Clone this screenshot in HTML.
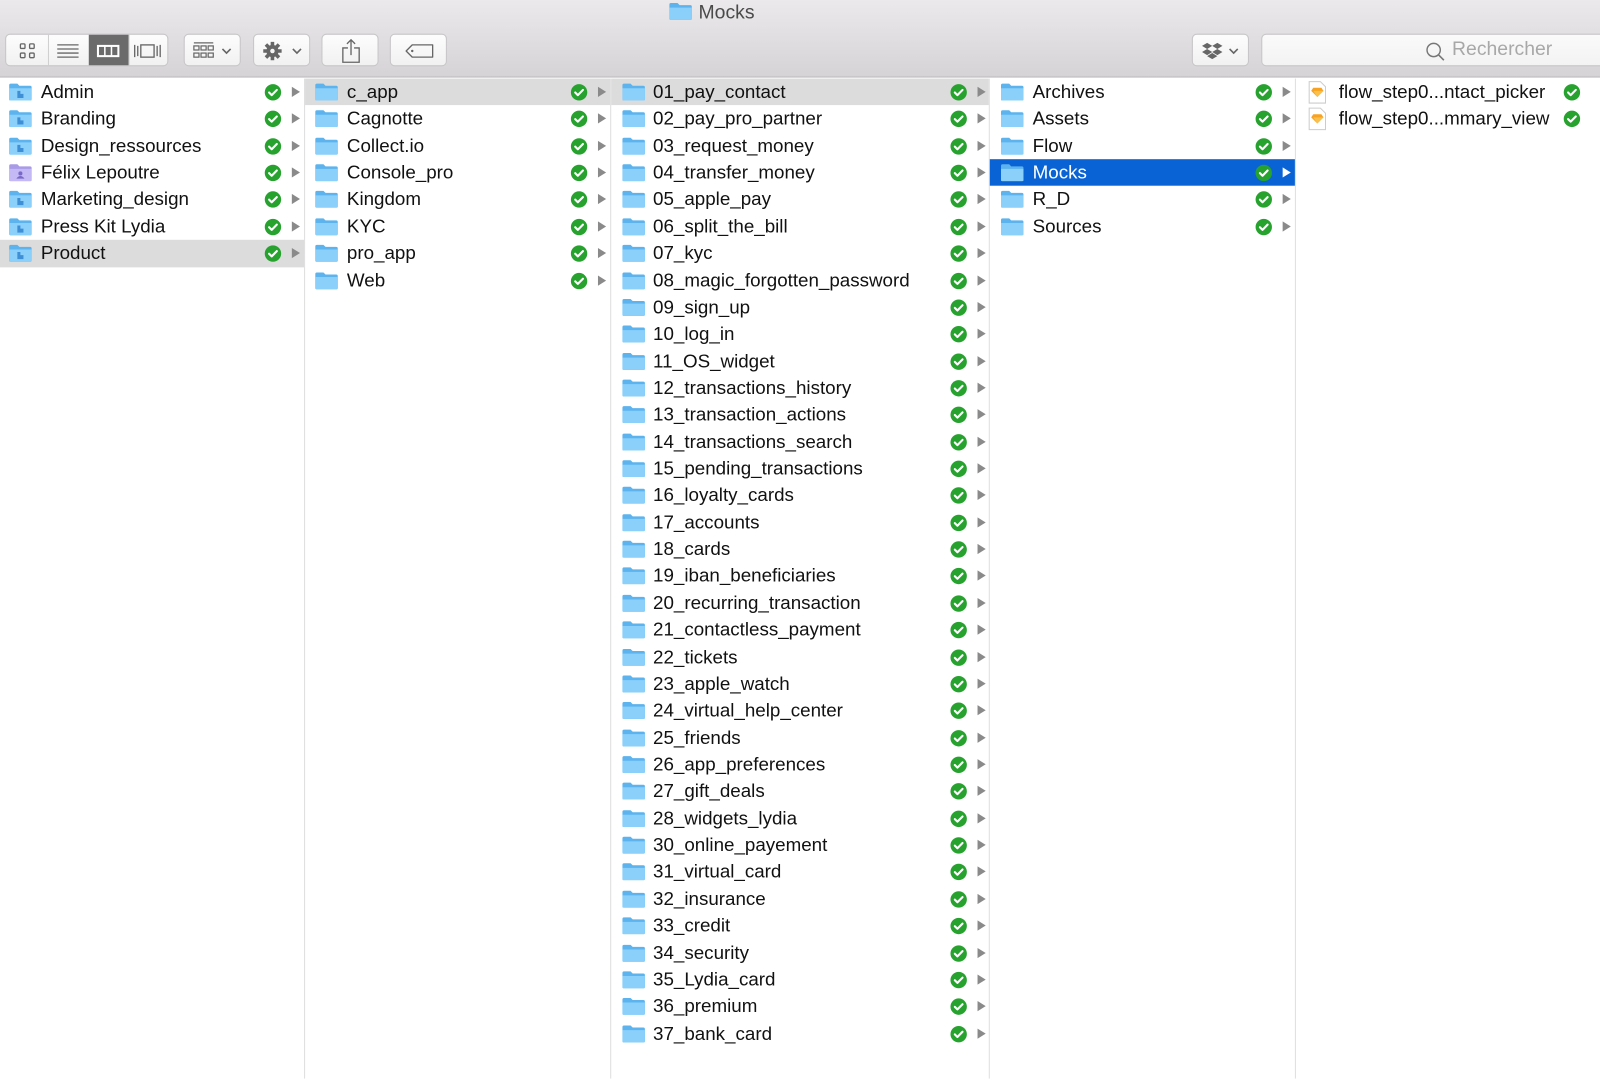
<!DOCTYPE html>
<html><head><meta charset="utf-8"><style>
*{margin:0;padding:0;box-sizing:border-box}
body{width:1600px;height:1055px;overflow:hidden;background:#fff;font-family:"Liberation Sans",sans-serif;position:relative}
#w{position:absolute;left:0;top:0;width:1568px;height:1034px;transform:scale(1.0204);transform-origin:0 0}
#tb{position:absolute;left:0;top:0;width:1600px;height:76px;background:linear-gradient(#ebe9eb,#d5d3d5);border-bottom:1px solid #b9b7b9}
#title{position:absolute;top:2px;left:0;width:1394px;text-align:center;font-size:19px;color:#4a4a4a}
.btn{position:absolute;top:33px;height:32px;background:linear-gradient(#fdfdfd,#f1f1f1);border:1px solid #c8c6c8;border-radius:5px}
.col{position:absolute;top:77px;height:980px;border-right:1px solid #dedede}
.r{height:26.37px;position:relative;font-size:18.4px;color:#111;line-height:26px;white-space:nowrap}
.r.g{background:#dcdcdc}.r.b{background:#0a63d5;color:#fff}
.r svg.f{position:absolute;top:4px}
.r .t{position:absolute}
.r svg.c{position:absolute;top:5px;width:17px;height:17px}
.r .a{position:absolute;top:8px;width:0;height:0;border-left:8px solid #8a8a8a;border-top:5px solid transparent;border-bottom:5px solid transparent}
.r.b .a{border-left-color:#fff}
#c1 .f{left:8px}#c1 .t{left:40px}#c1 .c{left:259px}#c1 .a{left:286px}
#c2 .f{left:9px}#c2 .t{left:41px}#c2 .c{left:260px}#c2 .a{left:287px}
#c3 .f{left:10px}#c3 .t{left:41px}#c3 .c{left:332px}#c3 .a{left:359px}
#c4 .f{left:10px}#c4 .t{left:42px}#c4 .c{left:260px}#c4 .a{left:287px}
</style></head><body>
<svg width="0" height="0" style="position:absolute"><defs>
<symbol id="fo" viewBox="0 0 24 18"><path d="M1 2.5Q1 1 2.5 1H9l2 2h10.5Q23 3 23 4.5V16.5Q23 17.5 22 17.5H2Q1 17.5 1 16.5Z" fill="#5cb3ee"/><path d="M1 5.5H23V16.5Q23 17.5 22 17.5H2Q1 17.5 1 16.5Z" fill="#8ad0fb"/></symbol>
<symbol id="fb" viewBox="0 0 24 18"><path d="M1 2.5Q1 1 2.5 1H9l2 2h10.5Q23 3 23 4.5V16.5Q23 17.5 22 17.5H2Q1 17.5 1 16.5Z" fill="#5cb3ee"/><path d="M1 5.5H23V16.5Q23 17.5 22 17.5H2Q1 17.5 1 16.5Z" fill="#8ad0fb"/><path d="M9 8h3v7H9zM12 11h3v4h-3z" fill="#3e8fd6"/></symbol>
<symbol id="fu" viewBox="0 0 24 18"><path d="M1 2.5Q1 1 2.5 1H9l2 2h10.5Q23 3 23 4.5V16.5Q23 17.5 22 17.5H2Q1 17.5 1 16.5Z" fill="#a99be6"/><path d="M1 5.5H23V16.5Q23 17.5 22 17.5H2Q1 17.5 1 16.5Z" fill="#c5b9f5"/><circle cx="12" cy="10" r="2" fill="#7a68c8"/><path d="M8 15q4-5 8 0z" fill="#7a68c8"/></symbol>
<symbol id="ck" viewBox="0 0 18 18"><circle cx="9" cy="9" r="8.5" fill="#27a22f"/><path d="M5 9.2l2.7 2.7L13 6.5" stroke="#fff" stroke-width="2.2" fill="none" stroke-linecap="round" stroke-linejoin="round"/></symbol>
</defs></svg>
<div id="w">
<div id="tb">
<div id="title"><svg width="24" height="18" style="vertical-align:-2px;margin-right:6px"><use href="#fo"/></svg>Mocks</div>
<div class="btn" style="left:5px;width:160px;overflow:hidden">
 <div style="position:absolute;left:41px;top:0;bottom:0;border-left:1px solid #d0d0d0"></div>
 <div style="position:absolute;left:81px;top:-1px;width:39px;height:32px;background:#6b6b6b"></div>
 <div style="position:absolute;left:120px;top:0;bottom:0;border-left:1px solid #d0d0d0"></div>
 <svg style="position:absolute;left:13px;top:8px" width="16" height="16"><g fill="none" stroke="#666" stroke-width="1.3"><rect x="1" y="1" width="4.5" height="4.5" rx="1"/><rect x="10" y="1" width="4.5" height="4.5" rx="1"/><rect x="1" y="10" width="4.5" height="4.5" rx="1"/><rect x="10" y="10" width="4.5" height="4.5" rx="1"/></g></svg>
 <svg style="position:absolute;left:50px;top:8px" width="22" height="16"><g stroke="#666" stroke-width="1.3"><path d="M0 2h21M0 6h21M0 10h21M0 14h21"/></g></svg>
 <svg style="position:absolute;left:88px;top:8px" width="24" height="16"><rect x="1" y="2" width="22" height="12" fill="#fff"/><g fill="#6b6b6b"><rect x="3" y="4" width="5" height="8"/><rect x="9.5" y="4" width="5" height="8"/><rect x="16" y="4" width="5" height="8"/></g></svg>
 <svg style="position:absolute;left:124px;top:8px" width="30" height="16"><g fill="none" stroke="#666" stroke-width="1.3"><rect x="8" y="2" width="13" height="12"/><path d="M2 2v12M5 3v10M24 3v10M27 2v12"/></g></svg>
</div>
<div class="btn" style="left:180px;width:56px"><svg style="position:absolute;left:8px;top:7px" width="40" height="18"><g fill="none" stroke="#666" stroke-width="1.2"><path d="M1 1h19"/><rect x="1" y="4" width="5" height="4"/><rect x="8" y="4" width="5" height="4"/><rect x="15" y="4" width="5" height="4"/><rect x="1" y="11" width="5" height="4"/><rect x="8" y="11" width="5" height="4"/><rect x="15" y="11" width="5" height="4"/><path d="M29 7l4 4 4-4" stroke-width="1.6"/></g></svg></div>
<div class="btn" style="left:248px;width:56px"><svg style="position:absolute;left:7px;top:6px" width="42" height="20"><g fill="#666"><circle cx="11" cy="10" r="6"/><g stroke="#666" stroke-width="3.5"><path d="M11 1v18M2 10h18M4.6 3.6l12.8 12.8M17.4 3.6L4.6 16.4"/></g></g><circle cx="11" cy="10" r="2.2" fill="#f5f5f5"/><path d="M31 8l4 4 4-4" fill="none" stroke="#666" stroke-width="1.6"/></svg></div>
<div class="btn" style="left:315px;width:56px"><svg style="position:absolute;left:18px;top:3px" width="20" height="26"><g fill="none" stroke="#666" stroke-width="1.3"><path d="M7 10H2v14h16V10h-5M10 17V2M6 6l4-4 4 4"/></g></svg></div>
<div class="btn" style="left:382px;width:56px"><svg style="position:absolute;left:14px;top:8px" width="30" height="16"><path d="M7 2h20v12H7L1 8z" fill="none" stroke="#666" stroke-width="1.3" stroke-linejoin="round"/><circle cx="7" cy="8" r="1.2" fill="#666"/></svg></div>
<div class="btn" style="left:1168px;width:56px"><svg style="position:absolute;left:8px;top:7px" width="40" height="18"><g fill="#666"><path d="M6 1l5 3-5 3-5-3zM16 1l5 3-5 3-5-3zM6 7l5 3-5 3-5-3zM16 7l5 3-5 3-5-3zM11 11l5 3-5 3-5-3z"/></g><path d="M28 7l4 4 4-4" fill="none" stroke="#666" stroke-width="1.6"/></svg></div>
<div class="btn" style="left:1236px;width:380px;background:linear-gradient(#fafafa,#f3f3f3)"><svg style="position:absolute;left:159px;top:6px" width="22" height="22"><circle cx="9" cy="9" r="6.5" fill="none" stroke="#777" stroke-width="1.4"/><path d="M14 14l5 5" stroke="#777" stroke-width="1.6"/></svg><span style="position:absolute;left:186px;top:4px;font-size:19px;color:#a8a8a8">Rechercher</span></div>
</div>

<div class="col" id="c1" style="left:0;width:299px">
<div class="r"><svg class="f" width="24" height="18"><use href="#fb"/></svg><span class="t">Admin</span><svg class="c"><use href="#ck"/></svg><i class="a"></i></div>
<div class="r"><svg class="f" width="24" height="18"><use href="#fb"/></svg><span class="t">Branding</span><svg class="c"><use href="#ck"/></svg><i class="a"></i></div>
<div class="r"><svg class="f" width="24" height="18"><use href="#fb"/></svg><span class="t">Design_ressources</span><svg class="c"><use href="#ck"/></svg><i class="a"></i></div>
<div class="r"><svg class="f" width="24" height="18"><use href="#fu"/></svg><span class="t">Félix Lepoutre</span><svg class="c"><use href="#ck"/></svg><i class="a"></i></div>
<div class="r"><svg class="f" width="24" height="18"><use href="#fb"/></svg><span class="t">Marketing_design</span><svg class="c"><use href="#ck"/></svg><i class="a"></i></div>
<div class="r"><svg class="f" width="24" height="18"><use href="#fb"/></svg><span class="t">Press Kit Lydia</span><svg class="c"><use href="#ck"/></svg><i class="a"></i></div>
<div class="r g"><svg class="f" width="24" height="18"><use href="#fb"/></svg><span class="t">Product</span><svg class="c"><use href="#ck"/></svg><i class="a"></i></div>
</div>

<div class="col" id="c2" style="left:299px;width:300px">
<div class="r g"><svg class="f" width="24" height="18"><use href="#fo"/></svg><span class="t">c_app</span><svg class="c"><use href="#ck"/></svg><i class="a"></i></div>
<div class="r"><svg class="f" width="24" height="18"><use href="#fo"/></svg><span class="t">Cagnotte</span><svg class="c"><use href="#ck"/></svg><i class="a"></i></div>
<div class="r"><svg class="f" width="24" height="18"><use href="#fo"/></svg><span class="t">Collect.io</span><svg class="c"><use href="#ck"/></svg><i class="a"></i></div>
<div class="r"><svg class="f" width="24" height="18"><use href="#fo"/></svg><span class="t">Console_pro</span><svg class="c"><use href="#ck"/></svg><i class="a"></i></div>
<div class="r"><svg class="f" width="24" height="18"><use href="#fo"/></svg><span class="t">Kingdom</span><svg class="c"><use href="#ck"/></svg><i class="a"></i></div>
<div class="r"><svg class="f" width="24" height="18"><use href="#fo"/></svg><span class="t">KYC</span><svg class="c"><use href="#ck"/></svg><i class="a"></i></div>
<div class="r"><svg class="f" width="24" height="18"><use href="#fo"/></svg><span class="t">pro_app</span><svg class="c"><use href="#ck"/></svg><i class="a"></i></div>
<div class="r"><svg class="f" width="24" height="18"><use href="#fo"/></svg><span class="t">Web</span><svg class="c"><use href="#ck"/></svg><i class="a"></i></div>
</div>

<div class="col" id="c3" style="left:599px;width:371px">
<div class="r g"><svg class="f" width="24" height="18"><use href="#fo"/></svg><span class="t">01_pay_contact</span><svg class="c"><use href="#ck"/></svg><i class="a"></i></div>
<div class="r"><svg class="f" width="24" height="18"><use href="#fo"/></svg><span class="t">02_pay_pro_partner</span><svg class="c"><use href="#ck"/></svg><i class="a"></i></div>
<div class="r"><svg class="f" width="24" height="18"><use href="#fo"/></svg><span class="t">03_request_money</span><svg class="c"><use href="#ck"/></svg><i class="a"></i></div>
<div class="r"><svg class="f" width="24" height="18"><use href="#fo"/></svg><span class="t">04_transfer_money</span><svg class="c"><use href="#ck"/></svg><i class="a"></i></div>
<div class="r"><svg class="f" width="24" height="18"><use href="#fo"/></svg><span class="t">05_apple_pay</span><svg class="c"><use href="#ck"/></svg><i class="a"></i></div>
<div class="r"><svg class="f" width="24" height="18"><use href="#fo"/></svg><span class="t">06_split_the_bill</span><svg class="c"><use href="#ck"/></svg><i class="a"></i></div>
<div class="r"><svg class="f" width="24" height="18"><use href="#fo"/></svg><span class="t">07_kyc</span><svg class="c"><use href="#ck"/></svg><i class="a"></i></div>
<div class="r"><svg class="f" width="24" height="18"><use href="#fo"/></svg><span class="t">08_magic_forgotten_password</span><svg class="c"><use href="#ck"/></svg><i class="a"></i></div>
<div class="r"><svg class="f" width="24" height="18"><use href="#fo"/></svg><span class="t">09_sign_up</span><svg class="c"><use href="#ck"/></svg><i class="a"></i></div>
<div class="r"><svg class="f" width="24" height="18"><use href="#fo"/></svg><span class="t">10_log_in</span><svg class="c"><use href="#ck"/></svg><i class="a"></i></div>
<div class="r"><svg class="f" width="24" height="18"><use href="#fo"/></svg><span class="t">11_OS_widget</span><svg class="c"><use href="#ck"/></svg><i class="a"></i></div>
<div class="r"><svg class="f" width="24" height="18"><use href="#fo"/></svg><span class="t">12_transactions_history</span><svg class="c"><use href="#ck"/></svg><i class="a"></i></div>
<div class="r"><svg class="f" width="24" height="18"><use href="#fo"/></svg><span class="t">13_transaction_actions</span><svg class="c"><use href="#ck"/></svg><i class="a"></i></div>
<div class="r"><svg class="f" width="24" height="18"><use href="#fo"/></svg><span class="t">14_transactions_search</span><svg class="c"><use href="#ck"/></svg><i class="a"></i></div>
<div class="r"><svg class="f" width="24" height="18"><use href="#fo"/></svg><span class="t">15_pending_transactions</span><svg class="c"><use href="#ck"/></svg><i class="a"></i></div>
<div class="r"><svg class="f" width="24" height="18"><use href="#fo"/></svg><span class="t">16_loyalty_cards</span><svg class="c"><use href="#ck"/></svg><i class="a"></i></div>
<div class="r"><svg class="f" width="24" height="18"><use href="#fo"/></svg><span class="t">17_accounts</span><svg class="c"><use href="#ck"/></svg><i class="a"></i></div>
<div class="r"><svg class="f" width="24" height="18"><use href="#fo"/></svg><span class="t">18_cards</span><svg class="c"><use href="#ck"/></svg><i class="a"></i></div>
<div class="r"><svg class="f" width="24" height="18"><use href="#fo"/></svg><span class="t">19_iban_beneficiaries</span><svg class="c"><use href="#ck"/></svg><i class="a"></i></div>
<div class="r"><svg class="f" width="24" height="18"><use href="#fo"/></svg><span class="t">20_recurring_transaction</span><svg class="c"><use href="#ck"/></svg><i class="a"></i></div>
<div class="r"><svg class="f" width="24" height="18"><use href="#fo"/></svg><span class="t">21_contactless_payment</span><svg class="c"><use href="#ck"/></svg><i class="a"></i></div>
<div class="r"><svg class="f" width="24" height="18"><use href="#fo"/></svg><span class="t">22_tickets</span><svg class="c"><use href="#ck"/></svg><i class="a"></i></div>
<div class="r"><svg class="f" width="24" height="18"><use href="#fo"/></svg><span class="t">23_apple_watch</span><svg class="c"><use href="#ck"/></svg><i class="a"></i></div>
<div class="r"><svg class="f" width="24" height="18"><use href="#fo"/></svg><span class="t">24_virtual_help_center</span><svg class="c"><use href="#ck"/></svg><i class="a"></i></div>
<div class="r"><svg class="f" width="24" height="18"><use href="#fo"/></svg><span class="t">25_friends</span><svg class="c"><use href="#ck"/></svg><i class="a"></i></div>
<div class="r"><svg class="f" width="24" height="18"><use href="#fo"/></svg><span class="t">26_app_preferences</span><svg class="c"><use href="#ck"/></svg><i class="a"></i></div>
<div class="r"><svg class="f" width="24" height="18"><use href="#fo"/></svg><span class="t">27_gift_deals</span><svg class="c"><use href="#ck"/></svg><i class="a"></i></div>
<div class="r"><svg class="f" width="24" height="18"><use href="#fo"/></svg><span class="t">28_widgets_lydia</span><svg class="c"><use href="#ck"/></svg><i class="a"></i></div>
<div class="r"><svg class="f" width="24" height="18"><use href="#fo"/></svg><span class="t">30_online_payement</span><svg class="c"><use href="#ck"/></svg><i class="a"></i></div>
<div class="r"><svg class="f" width="24" height="18"><use href="#fo"/></svg><span class="t">31_virtual_card</span><svg class="c"><use href="#ck"/></svg><i class="a"></i></div>
<div class="r"><svg class="f" width="24" height="18"><use href="#fo"/></svg><span class="t">32_insurance</span><svg class="c"><use href="#ck"/></svg><i class="a"></i></div>
<div class="r"><svg class="f" width="24" height="18"><use href="#fo"/></svg><span class="t">33_credit</span><svg class="c"><use href="#ck"/></svg><i class="a"></i></div>
<div class="r"><svg class="f" width="24" height="18"><use href="#fo"/></svg><span class="t">34_security</span><svg class="c"><use href="#ck"/></svg><i class="a"></i></div>
<div class="r"><svg class="f" width="24" height="18"><use href="#fo"/></svg><span class="t">35_Lydia_card</span><svg class="c"><use href="#ck"/></svg><i class="a"></i></div>
<div class="r"><svg class="f" width="24" height="18"><use href="#fo"/></svg><span class="t">36_premium</span><svg class="c"><use href="#ck"/></svg><i class="a"></i></div>
<div class="r"><svg class="f" width="24" height="18"><use href="#fo"/></svg><span class="t">37_bank_card</span><svg class="c"><use href="#ck"/></svg><i class="a"></i></div>
</div>

<div class="col" id="c4" style="left:970px;width:300px">
<div class="r"><svg class="f" width="24" height="18"><use href="#fo"/></svg><span class="t">Archives</span><svg class="c"><use href="#ck"/></svg><i class="a"></i></div>
<div class="r"><svg class="f" width="24" height="18"><use href="#fo"/></svg><span class="t">Assets</span><svg class="c"><use href="#ck"/></svg><i class="a"></i></div>
<div class="r"><svg class="f" width="24" height="18"><use href="#fo"/></svg><span class="t">Flow</span><svg class="c"><use href="#ck"/></svg><i class="a"></i></div>
<div class="r b"><svg class="f" width="24" height="18"><use href="#fo"/></svg><span class="t">Mocks</span><svg class="c"><use href="#ck"/></svg><i class="a"></i></div>
<div class="r"><svg class="f" width="24" height="18"><use href="#fo"/></svg><span class="t">R_D</span><svg class="c"><use href="#ck"/></svg><i class="a"></i></div>
<div class="r"><svg class="f" width="24" height="18"><use href="#fo"/></svg><span class="t">Sources</span><svg class="c"><use href="#ck"/></svg><i class="a"></i></div>
</div>

<div class="col" id="c5" style="left:1270px;width:330px;border:none">
<div class="r"><svg style="position:absolute;left:12px;top:2px" width="18" height="23"><path d="M1 1h11l5 5v16H1z" fill="#fff" stroke="#ccc"/><path d="M5 7h8l2 3-6 6-6-6z" fill="#f7a221"/><path d="M5 10h10l-6 6z" fill="#fbc04a"/></svg><span style="position:absolute;left:42px">flow_step0...ntact_picker</span><svg style="position:absolute;left:262px;top:5px" width="17" height="17"><use href="#ck"/></svg></div>
<div class="r"><svg style="position:absolute;left:12px;top:2px" width="18" height="23"><path d="M1 1h11l5 5v16H1z" fill="#fff" stroke="#ccc"/><path d="M5 7h8l2 3-6 6-6-6z" fill="#f7a221"/><path d="M5 10h10l-6 6z" fill="#fbc04a"/></svg><span style="position:absolute;left:42px">flow_step0...mmary_view</span><svg style="position:absolute;left:262px;top:5px" width="17" height="17"><use href="#ck"/></svg></div>
</div>
</div>
</body></html>
